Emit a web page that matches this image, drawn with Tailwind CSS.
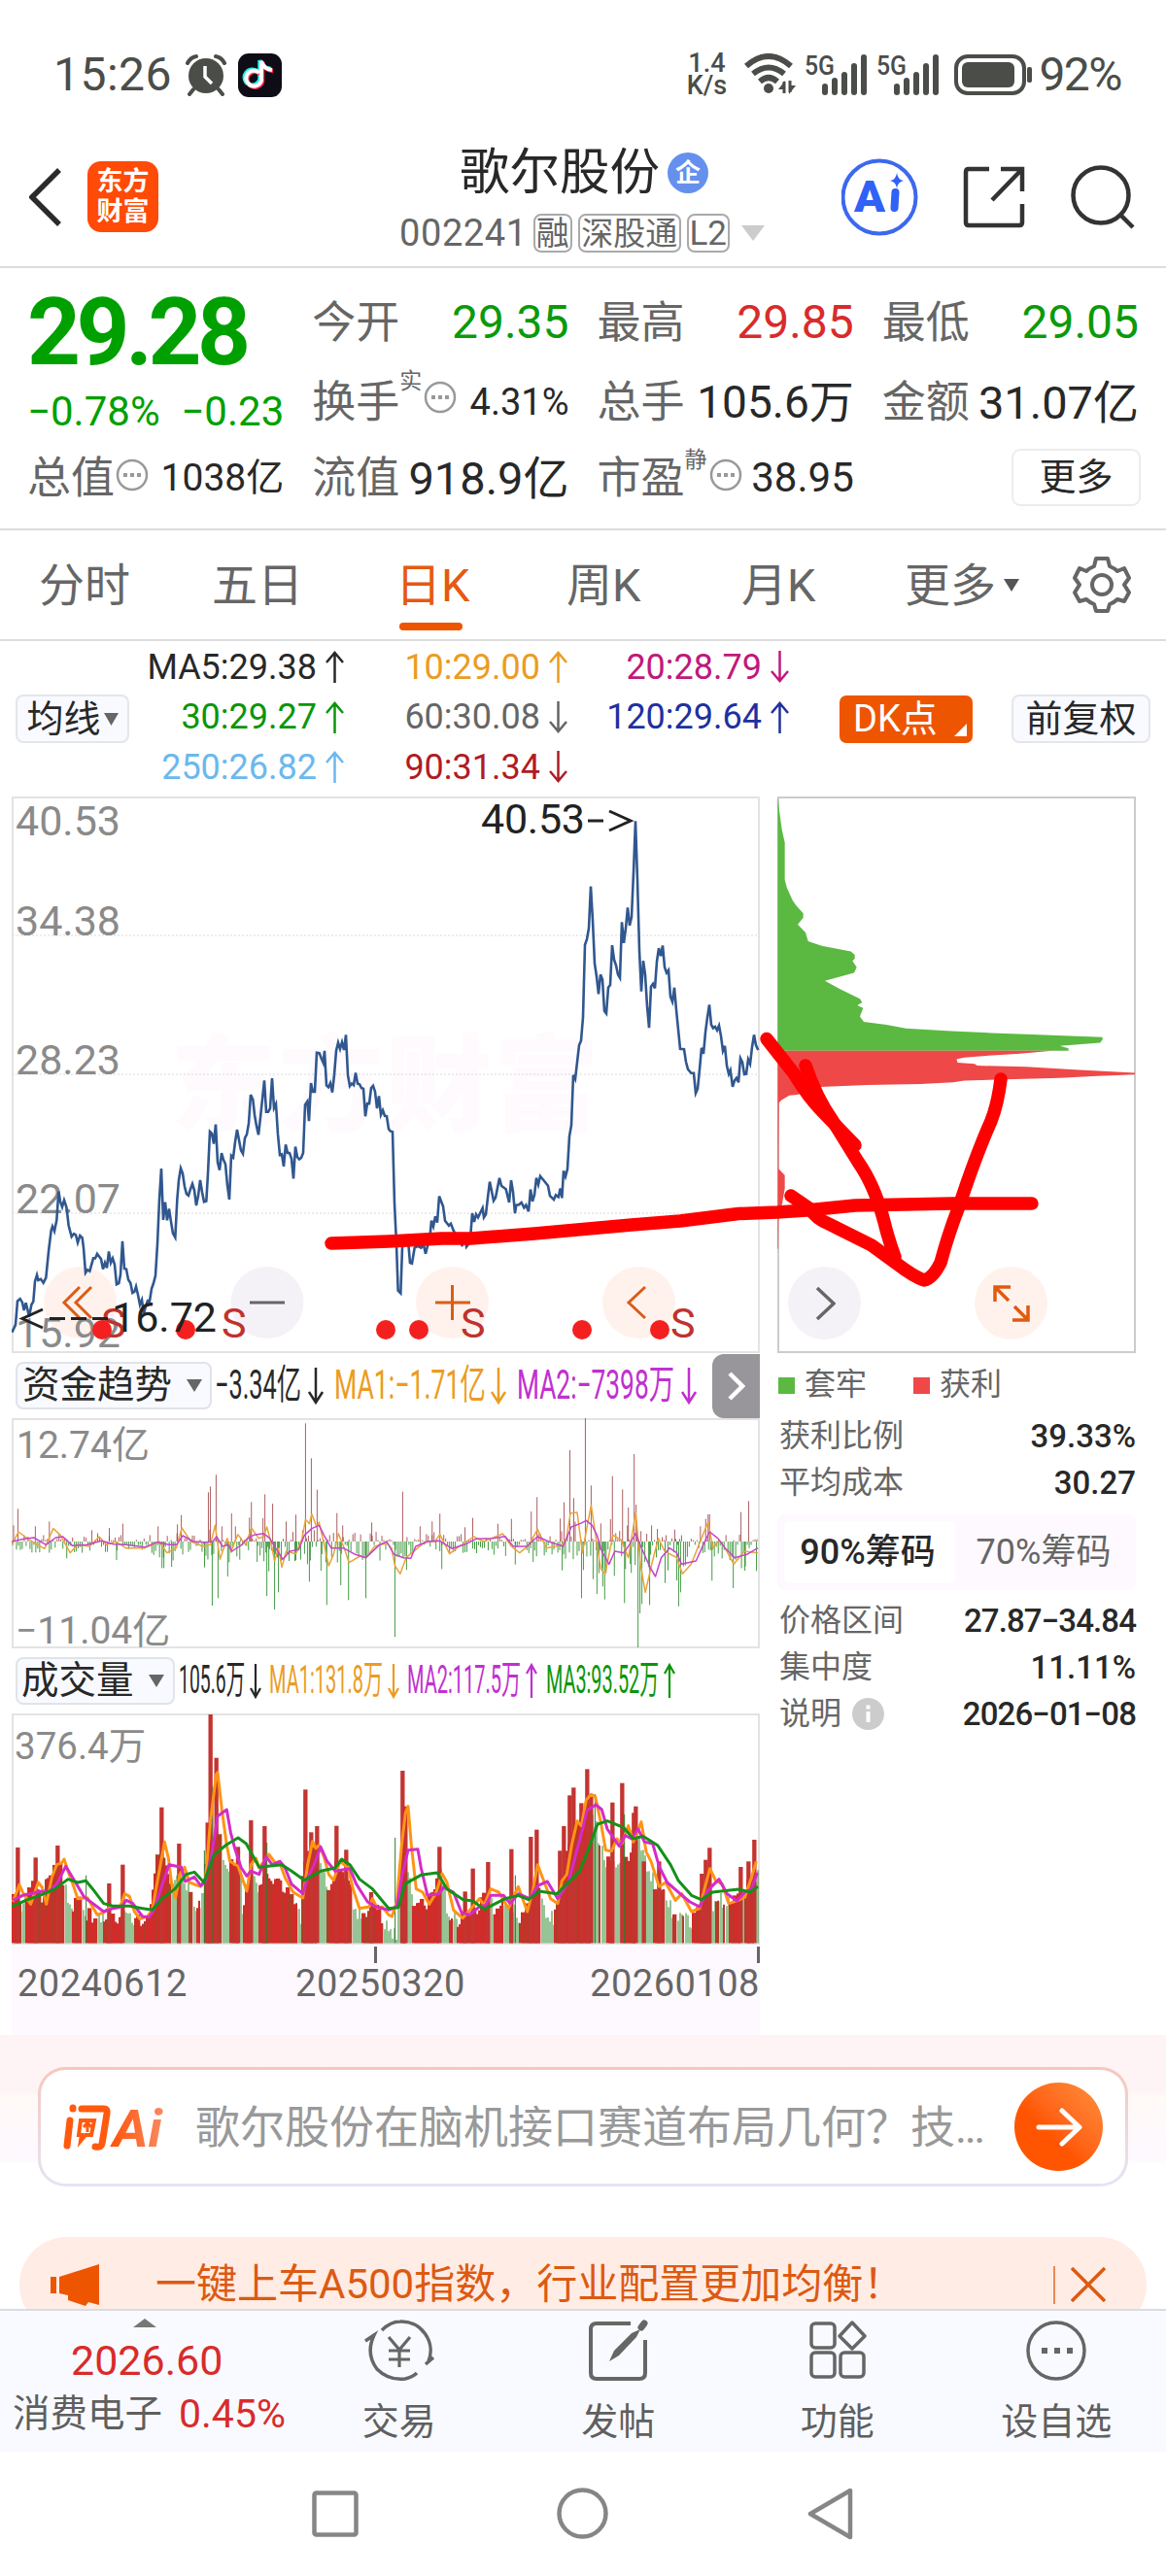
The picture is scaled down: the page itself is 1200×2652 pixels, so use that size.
<!DOCTYPE html>
<html lang="zh-CN">
  <head>
    <meta charset="UTF-8" />
    <meta name="viewport" content="width=device-width, initial-scale=1.0" />
    <title>歌尔股份 002241</title>
    <script src="https://cdn.jsdelivr.net/npm/@tailwindcss/browser@4"></script>
  </head>
  <body class="bg-white">
    <div
      class="relative w-[1200px] h-[2652px] overflow-hidden flex flex-col bg-white text-[#282828] leading-none whitespace-nowrap font-['Roboto','Noto_Sans_CJK_SC',sans-serif]"
    >
      <!-- Status bar -->
      <div class="h-[110px] shrink-0 flex items-end pb-[10px] pl-[55px] pr-[46px] text-[#4b4d49]">
        <div class="h-[46px] flex items-center">
          <span class="text-[48px] tracking-[0.500px]">15:26</span>
          <svg class="ml-[14px]" width="42" height="44" viewBox="0 0 42 44" fill="none" stroke="#4b4d49">
            <circle cx="21" cy="23" r="18" fill="#4b4d49" stroke="none" />
            <path d="M2 10 Q5 4 11 3 M40 10 Q37 4 31 3 M8 37 L4 42 M34 37 L38 42" stroke-width="4" stroke-linecap="round" />
            <path d="M20 13 V24 L27 31" stroke="#fff" stroke-width="3.5" />
          </svg>
          <svg class="ml-[12px]" width="45" height="45" viewBox="0 0 45 45" fill="none">
            <rect width="45" height="45" rx="11" fill="#0e0d17" />
            <path d="M22 20 A8 8 0 1 0 24 28 V8 Q26 16 35 17" transform="translate(-1.5 -1)" stroke="#2af0ea" stroke-width="4.5" />
            <path d="M22 20 A8 8 0 1 0 24 28 V8 Q26 16 35 17" transform="translate(1 1)" stroke="#fe2c55" stroke-width="4.5" />
            <path d="M22 20 A8 8 0 1 0 24 28 V8 Q26 16 35 17" stroke="#fff" stroke-width="4" />
          </svg>
        </div>
        <div class="ml-auto h-[46px] flex items-center">
          <div class="text-center font-medium text-[27px] leading-[23px] w-[46px]">1.4<br />K/s</div>
          <svg class="ml-[16px]" width="56" height="44" viewBox="0 0 56 44" fill="none" stroke="#4b4d49" stroke-width="6">
            <path d="M2 13 Q25 -7 48 13" />
            <path d="M9 21 Q25 8 41 21" />
            <path d="M16 29 Q25 21 34 29" />
            <circle cx="25" cy="36" r="5" fill="#4b4d49" stroke="none" />
            <path d="M41 29 V41 M47 28 V40" stroke-width="3" />
            <path d="M35 37 L42 28 V37Z M53 33 L46 42 V33Z" fill="#4b4d49" stroke="none" />
          </svg>
          <svg class="ml-[8px] overflow-visible" width="66" height="46" viewBox="0 0 66 46" fill="#4b4d49">
            <text x="-2" y="23" font-size="28" font-weight="500" textLength="31" lengthAdjust="spacingAndGlyphs">5G</text>
            <rect x="16" y="32" width="6" height="12" rx="3" /><rect x="26" y="26" width="6" height="18" rx="3" />
            <rect x="36" y="20" width="6" height="24" rx="3" /><rect x="46" y="11" width="6" height="33" rx="3" />
            <rect x="56" y="2" width="6" height="42" rx="3" />
          </svg>
          <svg class="ml-[8px] overflow-visible" width="66" height="46" viewBox="0 0 66 46" fill="#4b4d49">
            <text x="-2" y="23" font-size="28" font-weight="500" textLength="31" lengthAdjust="spacingAndGlyphs">5G</text>
            <rect x="16" y="32" width="6" height="12" rx="3" /><rect x="26" y="26" width="6" height="18" rx="3" />
            <rect x="36" y="20" width="6" height="24" rx="3" /><rect x="46" y="11" width="6" height="33" rx="3" />
            <rect x="56" y="2" width="6" height="42" rx="3" />
          </svg>
          <svg class="ml-[12px]" width="82" height="42" viewBox="0 0 82 42">
            <rect x="2" y="2" width="70" height="38" rx="12" fill="none" stroke="#4b4d49" stroke-width="4" />
            <rect x="8" y="8" width="54" height="26" rx="6" fill="#4b4d49" />
            <rect x="75" y="13" width="5" height="16" rx="2" fill="#4b4d49" />
          </svg>
          <span class="ml-[5px] text-[48px] tracking-[-1.500px]">92%</span>
        </div>
      </div>

      <!-- Title bar -->
      <div class="h-[166px] shrink-0 border-b-2 border-[#dcdcdc] flex items-start px-[30px]">
        <div class="w-[381px] flex items-center pt-[56px]">
          <svg width="33" height="62" viewBox="0 0 33 62" fill="none" stroke="#2b2b2b" stroke-width="5.5">
            <path d="M31 3 L3 31 L31 59" />
          </svg>
          <div class="ml-[27px] size-[73px] rounded-[14px] bg-[#ff4a08] text-white font-bold text-[27px] leading-[31px] flex items-center justify-center text-center">东方<br />财富</div>
        </div>
        <div class="w-[380px] pt-[41px]">
          <div class="flex items-center pl-[62px]">
            <span class="text-[51.500px] h-[54px] leading-[54px]">歌尔股份</span>
            <span class="ml-[8px] size-[42px] rounded-full bg-[#6590ee] text-white text-[26px] font-bold flex items-center justify-center">企</span>
          </div>
          <div class="mt-[15px] flex items-center text-[#666]">
            <span class="text-[38px] tracking-[0.600px]">002241</span>
            <span class="ml-[6px] h-[40px] w-[40px] border-2 border-[#aaa] rounded-[8px] text-[34px] flex items-center justify-center">融</span>
            <span class="ml-[6px] h-[40px] w-[106px] border-2 border-[#aaa] rounded-[8px] text-[33px] flex items-center justify-center">深股通</span>
            <span class="ml-[6px] h-[40px] w-[44px] border-2 border-[#aaa] rounded-[8px] text-[35px] flex items-center justify-center">L2</span>
            <svg class="ml-[12px]" width="24" height="16" viewBox="0 0 24 16"><path d="M0 0 H24 L12 16Z" fill="#ccc" /></svg>
          </div>
        </div>
        <div class="ml-auto flex items-center pt-[53px]">
          <svg width="80" height="80" viewBox="0 0 80 80">
            <circle cx="39" cy="40" r="37.5" fill="none" stroke="#3c68ef" stroke-width="4" />
            <text x="13" y="55" font-size="45" font-weight="900" fill="#2f62f5" textLength="32" lengthAdjust="spacingAndGlyphs">A</text>
            <path d="M55.500 35 L54.500 51" stroke="#2f62f5" stroke-width="8" stroke-linecap="round" />
            <path d="M57 15 Q58 22 64 23 Q58 24 57 31 Q56 24 50 23 Q56 22 57 15Z" fill="#2f62f5" />
          </svg>
          <svg class="ml-[45px]" width="64" height="64" viewBox="0 0 64 64" fill="none" stroke="#333" stroke-width="4.500">
            <path d="M27 3 H6 Q3 3 3 6 V58 Q3 61 6 61 H58 Q61 61 61 58 V39 M39 3 H61 V26 M61 3 L30 35" />
          </svg>
          <svg class="ml-[47px]" width="68" height="66" viewBox="0 0 68 66" fill="none" stroke="#333" stroke-width="4.500">
            <circle cx="31" cy="31" r="28.500" /><path d="M51 51 L64 64" />
          </svg>
        </div>
      </div>

      <!-- Quote -->
      <div class="h-[270px] shrink-0 border-b-2 border-[#dcdcdc] px-[28px] pt-[15px] grid grid-cols-4 gap-x-[29px] text-[#666]">
        <div class="flex flex-col text-[#00a000]">
          <div class="h-[102px] flex items-center text-[96px] font-bold tracking-[-4.500px]">29.28</div>
          <div class="h-[62px] flex items-center justify-between text-[42px]"><span>−0.78%</span><span>−0.23</span></div>
          <div class="h-[74px] flex items-center text-[45px] text-[#666]">
            总值
            <svg class="ml-px mb-[6px] shrink-0" width="34" height="34" viewBox="0 0 34 34"><circle cx="17" cy="17" r="15" fill="none" stroke="#999" stroke-width="2.500" /><path d="M8 17h4m3 0h4m3 0h4" stroke="#999" stroke-width="4" /></svg>
            <span class="ml-auto text-[39px] text-[#282828]">1038亿</span>
          </div>
        </div>
        <div class="flex flex-col text-[45px]">
          <div class="h-[82px] flex items-center justify-between">今开<span class="text-[48px] text-[#0a9a0a]">29.35</span></div>
          <div class="h-[82px] flex items-center">
            换手<span class="text-[23px] self-start pt-[8px]">实</span>
            <svg class="mb-[10px] ml-[2px] shrink-0" width="34" height="34" viewBox="0 0 34 34"><circle cx="17" cy="17" r="15" fill="none" stroke="#999" stroke-width="2.500" /><path d="M8 17h4m3 0h4m3 0h4" stroke="#999" stroke-width="4" /></svg>
            <span class="ml-auto text-[38px] text-[#282828]">4.31%</span>
          </div>
          <div class="h-[74px] flex items-center justify-between">流值<span class="text-[47px] text-[#282828]">918.9亿</span></div>
        </div>
        <div class="flex flex-col text-[45px]">
          <div class="h-[82px] flex items-center justify-between">最高<span class="text-[48px] text-[#d92b2b]">29.85</span></div>
          <div class="h-[82px] flex items-center justify-between">总手<span class="text-[46px] text-[#282828]">105.6万</span></div>
          <div class="h-[74px] flex items-center">
            市盈<span class="text-[23px] self-start pt-[7px]">静</span>
            <svg class="shrink-0 ml-[2px] mb-[6px]" width="34" height="34" viewBox="0 0 34 34"><circle cx="17" cy="17" r="15" fill="none" stroke="#999" stroke-width="2.500" /><path d="M8 17h4m3 0h4m3 0h4" stroke="#999" stroke-width="4" /></svg>
            <span class="ml-auto text-[42px] text-[#282828]">38.95</span>
          </div>
        </div>
        <div class="flex flex-col text-[45px]">
          <div class="h-[82px] flex items-center justify-between">最低<span class="text-[48px] text-[#0a9a0a]">29.05</span></div>
          <div class="h-[82px] flex items-center justify-between">金额<span class="text-[47px] text-[#282828]">31.07亿</span></div>
          <div class="h-[74px] flex items-center justify-end">
            <span class="mr-[-2px] mb-[2px] w-[133px] h-[59px] border-2 border-[#ececec] rounded-[9px] text-[38px] text-[#282828] flex items-center justify-center">更多</span>
          </div>
        </div>
      </div>

      <!-- Period tabs -->
      <div class="h-[114px] shrink-0 border-b-2 border-[#dcdcdc] flex items-center pl-[40px] pr-[36px] text-[47px] text-[#666]">
        <div class="w-[178px]">分时</div>
        <div class="w-[189px]">五日</div>
        <div class="relative w-[176px] text-[#e55a10]">日K<span class="absolute left-[4px] top-[62px] w-[65px] h-[8px] rounded-full bg-[#ee5500]"></span></div>
        <div class="w-[180px]">周K</div>
        <div class="w-[168px]">月K</div>
        <div class="flex items-center">更多<svg class="ml-[8px]" width="16" height="13" viewBox="0 0 16 13"><path d="M0 0 H16 L8 13Z" fill="#555" /></svg></div>
        <svg class="ml-auto" width="60" height="60" viewBox="0 0 60 60" fill="none" stroke="#666" stroke-width="4">
          <path d="M24 3 H36 L38 11 Q43 13 46 16 L53 13 L58 23 L53 30 L58 38 L53 47 L46 45 Q43 48 38 50 L36 57 H24 L22 50 Q17 48 14 45 L7 47 L2 38 L7 30 L2 23 L7 13 L14 16 Q17 13 22 11Z" stroke-linejoin="round" />
          <circle cx="30" cy="30" r="10" />
        </svg>
      </div>

      <!-- MA legend -->
      <div class="h-[160px] shrink-0 flex items-center pl-[16px] pr-[16px] text-[36px]">
        <div class="w-[117px] h-[50px] border-2 border-[#e4e6ea] rounded-[8px] bg-[#f8faff] text-[38px] flex items-center justify-center">均线<svg class="ml-[3px]" width="15" height="13" viewBox="0 0 15 13"><path d="M0 0 H15 L7.500 13Z" fill="#666" /></svg></div>
        <div class="w-[679px] h-[154px] grid grid-cols-[221px_230px_228px] items-center text-right">
          <div>MA5:29.38<svg class="inline ml-[9px] mb-[5px]" width="19" height="33" viewBox="0 0 19 33" fill="none" stroke="#282828" stroke-width="2.500"><path d="M9.500 33 V2 M1 12 L9.500 2 L18 12" /></svg></div>
          <div class="text-[#eb9c22]">10:29.00<svg class="inline ml-[9px] mb-[5px]" width="19" height="33" viewBox="0 0 19 33" fill="none" stroke="#eb9c22" stroke-width="2.500"><path d="M9.500 33 V2 M1 12 L9.500 2 L18 12" /></svg></div>
          <div class="text-[#c0187c]">20:28.79<svg class="inline ml-[9px] mb-[5px]" width="19" height="33" viewBox="0 0 19 33" fill="none" stroke="#c0187c" stroke-width="2.500"><path d="M9.500 0 V31 M1 21 L9.500 31 L18 21" /></svg></div>
          <div class="text-[#0a960a]">30:29.27<svg class="inline ml-[9px] mb-[5px]" width="19" height="33" viewBox="0 0 19 33" fill="none" stroke="#0a960a" stroke-width="2.500"><path d="M9.500 33 V2 M1 12 L9.500 2 L18 12" /></svg></div>
          <div class="text-[#666]">60:30.08<svg class="inline ml-[9px] mb-[5px]" width="19" height="33" viewBox="0 0 19 33" fill="none" stroke="#666" stroke-width="2.500"><path d="M9.500 0 V31 M1 21 L9.500 31 L18 21" /></svg></div>
          <div class="text-[#2030a0]">120:29.64<svg class="inline ml-[9px] mb-[5px]" width="19" height="33" viewBox="0 0 19 33" fill="none" stroke="#2030a0" stroke-width="2.500"><path d="M9.500 33 V2 M1 12 L9.500 2 L18 12" /></svg></div>
          <div class="text-[#6bb8ee]">250:26.82<svg class="inline ml-[9px] mb-[5px]" width="19" height="33" viewBox="0 0 19 33" fill="none" stroke="#6bb8ee" stroke-width="2.500"><path d="M9.500 33 V2 M1 12 L9.500 2 L18 12" /></svg></div>
          <div class="text-[#b01c24]">90:31.34<svg class="inline ml-[9px] mb-[5px]" width="19" height="33" viewBox="0 0 19 33" fill="none" stroke="#b01c24" stroke-width="2.500"><path d="M9.500 0 V31 M1 21 L9.500 31 L18 21" /></svg></div>
        </div>
        <div class="relative ml-[52px] w-[137px] h-[49px] rounded-[7px] bg-[#ee5500] text-white text-[38px] flex items-center pl-[14px]">DK点<svg class="absolute right-[6px] bottom-[7px]" width="13" height="13" viewBox="0 0 13 13"><path d="M13 0 V13 H0Z" fill="#fff" /></svg></div>
        <div class="ml-auto w-[143px] h-[50px] border-2 border-[#e4e6ea] rounded-[8px] bg-[#f8faff] text-[38px] flex items-center justify-center">前复权</div>
      </div>

      <div class="h-[1275px] shrink-0 flex pl-[12px]">
        <!-- Left: K line, fund trend, volume -->
        <div class="w-[770px] flex flex-col">
          <div class="relative h-[573px] border-2 border-[#e3e3e3] bg-white">
            <svg class="absolute -left-[14px] -top-[12px]" width="784" height="600" viewBox="0 0 784 600">
              <g font-size="108" font-weight="900" fill="#fefafd">
                <text x="176" y="346" textLength="440">东方财富</text>
              </g>
              <path d="M13 153 H780 M13 296 H780 M13 439 H780" stroke="#e6e6e6" stroke-width="1.500" stroke-dasharray="2 2" />
              <g font-size="43" fill="#8a8a8a">
                <text x="16" y="50">40.53</text>
                <text x="16" y="153">34.38</text>
                <text x="16" y="296">28.23</text>
                <text x="16" y="439">22.07</text>
              </g>
              <g fill="#fff2ed">
                <ellipse cx="82.500" cy="531" rx="37.500" ry="37" /><ellipse cx="465.500" cy="531" rx="37.500" ry="37" /><ellipse cx="657.500" cy="531" rx="37.500" ry="37" />
                <ellipse cx="275" cy="531" rx="37.500" ry="37" fill="#f5f2f7" />
              </g>
              <text x="16" y="577" font-size="43" fill="#8a8a8a">15.92</text>
            </svg>
            <svg class="absolute -left-[2px] -top-[2px]" width="770" height="573" viewBox="36 26 2310 1497" preserveAspectRatio="none" fill="none">
              <polyline vector-effect="non-scaling-stroke" stroke="#30578f" stroke-width="2.600" points="37,1467 48,1447 54,1383 62,1377 69,1387 74,1408 80,1388 86,1410 90,1425 97,1393 103,1384 108,1330 114,1313 118,1327 126,1324 134,1334 142,1320 150,1250 158,1193 162,1182 168,1195 175,1165 181,1088 186,1115 192,1130 198,1112 205,1130 212,1180 221,1210 228,1202 234,1205 240,1226 247,1207 254,1213 258,1240 264,1307 270,1299 277,1303 288,1268 294,1268 300,1256 306,1263 312,1270 318,1297 324,1280 330,1294 336,1250 342,1280 348,1268 354,1285 360,1338 367,1335 372,1312 378,1222 384,1296 390,1297 396,1325 403,1335 409,1361 415,1358 420,1344 426,1366 432,1393 438,1380 444,1417 450,1397 456,1382 462,1383 468,1350 474,1335 480,1315 486,1230 492,1110 498,1027 504,1165 510,1117 516,1166 522,1135 528,1170 534,1201 541,1212 547,1110 552,1058 558,1026 564,1040 570,1075 576,1095 582,1099 588,1082 594,1068 600,1085 606,1126 612,1100 618,1058 624,1090 630,1116 637,1114 642,1040 648,927 654,932 660,960 666,908 672,1010 678,1031 684,985 690,1003 696,1015 702,1072 708,1110 714,992 720,997 726,955 732,922 738,950 744,978 750,987 756,945 762,935 768,905 774,828 781,842 786,882 792,912 798,936 804,890 810,840 816,790 822,874 828,874 834,865 840,784 846,864 852,853 858,935 864,990 870,988 876,1021 882,962 888,985 894,985 900,1000 906,1054 912,968 918,996 924,1002 930,998 936,985 942,855 949,846 954,899 960,797 966,820 972,820 978,715 986,716 992,730 998,742 1002,710 1008,803 1014,808 1020,797 1026,822 1032,775 1038,710 1044,688 1050,705 1056,687 1062,708 1068,667 1074,775 1080,805 1086,798 1092,802 1098,769 1104,798 1110,800 1116,810 1122,812 1128,886 1134,852 1140,852 1146,810 1152,804 1158,820 1164,865 1170,832 1176,882 1182,870 1188,885 1194,886 1200,920 1205,926 1212,928 1218,1120 1224,1230 1229,1355 1237,1362 1242,1240 1250,1210 1258,1210 1262,1240 1266,1280 1272,1282 1280,1240 1290,1235 1300,1240 1308,1232 1314,1256 1320,1235 1328,1205 1332,1167 1338,1182 1344,1155 1350,1172 1356,1101 1368,1128 1374,1167 1386,1180 1392,1175 1400,1193 1410,1210 1420,1205 1427,1236 1434,1200 1440,1237 1448,1228 1453,1205 1458,1147 1464,1170 1470,1150 1476,1158 1490,1133 1494,1158 1500,1150 1506,1105 1512,1062 1524,1113 1530,1105 1542,1052 1548,1073 1562,1082 1572,1118 1578,1058 1584,1090 1590,1147 1594,1125 1602,1124 1610,1118 1618,1132 1624,1125 1632,1142 1638,1083 1644,1115 1650,1098 1656,1052 1662,1070 1668,1047 1680,1060 1692,1073 1698,1100 1710,1110 1716,1098 1724,1103 1730,1080 1735,1106 1740,1033 1746,1048 1752,1028 1758,940 1764,910 1770,775 1776,786 1782,740 1788,695 1794,683 1800,620 1806,425 1812,410 1818,380 1824,268 1830,360 1836,475 1842,510 1848,557 1854,505 1860,518 1866,603 1872,610 1878,540 1884,533 1890,426 1896,465 1902,480 1908,505 1914,514 1920,364 1926,420 1932,380 1938,325 1944,373 1950,350 1956,230 1962,92 1968,250 1974,440 1980,550 1986,468 1992,505 1998,590 2004,648 2010,537 2016,530 2022,542 2028,470 2034,434 2040,455 2046,427 2052,485 2058,500 2064,493 2070,565 2076,578 2082,540 2088,600 2100,705 2112,706 2118,740 2124,760 2134,770 2142,770 2148,824 2154,812 2160,760 2166,702 2172,718 2178,660 2184,620 2190,586 2196,640 2202,649 2208,645 2214,655 2220,642 2226,670 2232,710 2238,697 2244,750 2250,772 2255,762 2262,807 2268,790 2274,783 2280,795 2286,730 2292,740 2298,773 2304,772 2310,733 2316,745 2322,700 2328,667 2334,695 2341,708" />
            </svg>
            <svg class="absolute -left-[14px] -top-[12px]" width="784" height="600" viewBox="0 0 784 600" fill="none">
              <g stroke="#da5c18" stroke-width="3">
                <path d="M82 515 L66 531 L82 547 M94 515 L78 531 L94 547" />
                <path d="M448 531 H484 M465.500 513 V549" />
                <path d="M664 515 L647 531 L664 547" />
                <path d="M257 531 H293" stroke="#666" />
              </g>
              <g fill="#c0322e" font-size="43">
                <text x="104" y="567">S</text><text x="228" y="567">S</text><text x="474" y="567">S</text><text x="690" y="567">S</text>
              </g>
              <g fill="#f42020">
                <circle cx="105" cy="559" r="10" /><circle cx="191" cy="559" r="10" /><circle cx="397" cy="559" r="10" />
                <circle cx="431" cy="559" r="10" /><circle cx="599" cy="559" r="10" /><circle cx="679" cy="559" r="10" />
              </g>
              <g fill="#222" font-size="43">
                <text x="495" y="48" textLength="107">40.53</text><text x="115" y="561">16.72</text>
              </g>
              <path d="M605 35 H621 M627 25 L649 35 L627 45 M44 538 L23 547.500 L44 557 M51 547.500 H67 M73 547.500 H89 M95 547.500 H111" stroke="#222" stroke-width="3" />
            </svg>
          </div>

          <div class="h-[67px] flex items-center pl-[4px]">
            <div class="w-[202px] h-[49px] border-2 border-[#e0e3ea] rounded-[8px] bg-[#f8faff] text-[38.500px] flex items-center pl-[5px]">资金趋势<svg class="ml-[15px]" width="16" height="13" viewBox="0 0 16 13"><path d="M0 0 H16 L8 13Z" fill="#666" /></svg></div>
            <svg class="overflow-visible" width="514" height="66" viewBox="218 1393 514 66" font-size="42" fill="none">
              <text x="221" y="1439" fill="#282828" textLength="89" lengthAdjust="spacingAndGlyphs">−3.34亿</text>
              <text x="344" y="1439" fill="#eb9c22" textLength="156" lengthAdjust="spacingAndGlyphs">MA1:−1.71亿</text>
              <text x="532" y="1439" fill="#c030d0" textLength="162" lengthAdjust="spacingAndGlyphs">MA2:−7398万</text>
              <g stroke-width="2.500">
                <path d="M325 1407 V1442 M318 1432 L325 1443 L332 1432" stroke="#282828" />
                <path d="M513 1407 V1442 M506 1432 L513 1443 L520 1432" stroke="#eb9c22" />
                <path d="M709 1407 V1442 M702 1432 L709 1443 L716 1432" stroke="#c030d0" />
              </g>
            </svg>
            <div class="ml-auto w-[49px] h-[66px] rounded-l-[12px] bg-[#98969a] flex items-center justify-center">
              <svg width="18" height="30" viewBox="0 0 18 30" fill="none" stroke="#fff" stroke-width="4.500"><path d="M2 2 L15 15 L2 28" /></svg>
            </div>
          </div>

          <div class="relative h-[237px] border-2 border-[#e3e3e3]">
            <div class="absolute left-[3px] top-[7px] text-[39px] text-[#8a8a8a]">12.74亿</div>
            <div class="absolute left-[2px] bottom-[-4px] text-[39px] text-[#8a8a8a]">−11.04亿</div>
            <svg id="fund-chart" class="absolute -left-[2px] -top-[2px]" width="770" height="237" viewBox="24 209 1548 711" preserveAspectRatio="none" fill="none"></svg>
          </div>

          <div class="h-[67px] flex items-center pl-[4px]">
            <div class="w-[164px] h-[49px] border-2 border-[#e0e3ea] rounded-[8px] bg-[#f8faff] text-[38.500px] flex items-center pl-[4px]">成交量<svg class="ml-[15px]" width="16" height="13" viewBox="0 0 16 13"><path d="M0 0 H16 L8 13Z" fill="#666" /></svg></div>
            <svg class="overflow-visible" width="530" height="60" viewBox="180 1701 530 60" font-size="40" fill="none">
              <text x="184" y="1743" fill="#282828" textLength="68" lengthAdjust="spacingAndGlyphs">105.6万</text>
              <text x="277" y="1743" fill="#eb9c22" textLength="117" lengthAdjust="spacingAndGlyphs">MA1:131.8万</text>
              <text x="419" y="1743" fill="#c030d0" textLength="117" lengthAdjust="spacingAndGlyphs">MA2:117.5万</text>
              <text x="562" y="1743" fill="#0a960a" textLength="116" lengthAdjust="spacingAndGlyphs">MA3:93.52万</text>
              <g stroke-width="2.200">
                <path d="M263 1713 V1747 M258 1738 L263 1747 L268 1738" stroke="#282828" />
                <path d="M405 1713 V1747 M400 1738 L405 1747 L410 1738" stroke="#eb9c22" />
                <path d="M547 1748 V1714 M542 1723 L547 1714 L552 1723" stroke="#c030d0" />
                <path d="M689 1748 V1714 M684 1723 L689 1714 L694 1723" stroke="#0a960a" />
              </g>
            </svg>
          </div>

          <div class="relative h-[238px] border-2 border-[#e3e3e3]">
            <svg id="volume-chart" class="absolute -left-[2px] -top-[2px]" width="770" height="238" viewBox="36 193 2310 714" preserveAspectRatio="none" fill="none"></svg>
            <div class="absolute left-[1px] top-[13px] text-[38.500px] text-[#8a8a8a]">376.4万</div>
          </div>

          <div class="relative h-[93px] bg-[#fdf9fe] flex justify-between items-start pt-[21px] pl-[6px] text-[38px] tracking-[0.500px] text-[#666]">
            <span>20240612</span><span class="mr-[17px]">20250320</span><span>20260108</span>
            <span class="absolute left-[373px] top-[2px] w-[3px] h-[17px] bg-[#666]"></span>
            <span class="absolute right-0 top-[2px] w-[3px] h-[17px] bg-[#666]"></span>
          </div>
        </div>

        <!-- Right: chip distribution -->
        <div class="ml-[18px] w-[369px] flex flex-col text-[32px] text-[#666]">
          <div class="relative h-[573px] border-2 border-[#ccc] bg-white">
            <svg class="absolute -left-[2px] -top-[2px]" width="369" height="573" viewBox="63 26 1107 1497" preserveAspectRatio="none">
              <path fill="#5bb942" d="M64 27 70 70 77 115 86 150 86 250 92 270 102 290 110 305 120 318 130 328 143 340 143 352 126 370 150 392 158 415 200 428 290 443 302 452 302 462 295 468 308 485 300 500 210 522 255 543 318 570 325 580 310 588 328 595 318 618 330 632 400 640 460 650 600 657 725 662 850 666 1067 673 1067 680 1060 688 935 697 962 703 962 710 64 710Z" />
              <path fill="#ef4848" d="M64 710 912 710 812 718 727 722 640 728 616 733 620 742 672 745 680 750 832 753 970 760 1167 769 1167 774 1050 778 935 783 640 790 605 795 505 799 340 802 195 807 125 828 100 830 75 843 68 850 67 1027 86 1045 86 1080 80 1110 78 1122 67 1140 66 1243 64 1243Z" />
            </svg>
            <div class="absolute left-[9px] top-[482px] size-[75px] rounded-full bg-[#f5f2f7] flex items-center justify-center">
              <svg width="22" height="36" viewBox="0 0 22 36" fill="none" stroke="#666" stroke-width="3.500"><path d="M3 2 L20 18 L3 34" /></svg>
            </div>
            <div class="absolute left-[201px] top-[482px] size-[75px] rounded-full bg-[#fff2ed] flex items-center justify-center">
              <svg width="38" height="38" viewBox="0 0 38 38" fill="none" stroke="#e05a10" stroke-width="3.500"><path d="M2 17 V2 H18 M3 3 L16 16 M36 21 V36 H20 M35 35 L22 22" /></svg>
            </div>
          </div>
          <div class="h-[64px] flex items-center">
            <span class="size-[17px] mt-[2px] ml-px bg-[#5bb942]"></span><span class="ml-[10px]">套牢</span>
            <span class="ml-[48px] mt-[2px] size-[17px] bg-[#ef4848]"></span><span class="ml-[10px]">获利</span>
          </div>
          <div class="h-[42px] flex items-center justify-between"><span class="pl-[2px]">获利比例</span><span class="text-[33px] font-medium text-[#282828]">39.33%</span></div>
          <div class="h-[54px] flex items-center justify-between"><span class="pl-[2px]">平均成本</span><span class="text-[33px] font-medium text-[#282828]">30.27</span></div>
          <div class="mt-[6px] h-[78px] rounded-[8px] bg-[#fdf9fe] p-[7px] flex text-[36px]">
            <div class="w-[176px] h-[64px] rounded-[6px] bg-white text-[#282828] font-medium flex items-center justify-center pr-[4px]">90%筹码</div>
            <div class="flex-1 flex items-center justify-center pl-[3px]">70%筹码</div>
          </div>
          <div class="mt-[7px] h-[48px] flex items-center justify-between"><span class="pl-[2px]">价格区间</span><span class="text-[33px] font-medium tracking-[-0.900px] text-[#282828]">27.87−34.84</span></div>
          <div class="h-[48px] flex items-center justify-between"><span class="pl-[2px]">集中度</span><span class="text-[33px] font-medium text-[#282828]">11.11%</span></div>
          <div class="h-[48px] flex items-center">
            <span class="pl-[2px]">说明</span>
            <svg class="ml-[11px]" width="33" height="33" viewBox="0 0 33 33"><circle cx="16.500" cy="16.500" r="16.500" fill="#ccc" /><path d="M16.500 14 V25 M16.500 7.500 V11.500" stroke="#fff" stroke-width="4" /></svg>
            <span class="ml-auto text-[33px] font-medium tracking-[-0.900px] text-[#282828]">2026−01−08</span>
          </div>
        </div>
      </div>

      <!-- Ask AI -->
      <div class="h-[208px] shrink-0 px-[39px] pt-[33px] bg-[linear-gradient(180deg,#fff4f5_0px,#fff4f5_58px,#fffaf6_64px,#fef9fc_100px,#fdf9fe_128px,#fff_134px)]">
        <div class="h-[123px] rounded-[28px] p-[3px] bg-linear-to-b from-[#f6c6be] to-[#e4e4f5]">
          <div class="h-full rounded-[25px] bg-white flex items-center pl-[23px] pr-[23px]">
            <svg class="overflow-visible" width="108" height="50" viewBox="0 0 108 50" fill="none">
              <defs><linearGradient id="ask" x1="0" x2="1"><stop offset="0" stop-color="#ff5208" /><stop offset="1" stop-color="#f98a62" /></linearGradient></defs>
              <g stroke="#ff5a10" stroke-width="7" stroke-linecap="round" stroke-linejoin="round">
                <path d="M7 18 L4 44 M10 5 V6" /><path d="M19 6 H42 Q46 6 45 11 L40 42 Q39 46 33 45" />
              </g>
              <path d="M18 18 H32 L29 33 H23 L18 39 L19 33 H16Z" stroke="#ff5a10" stroke-width="4" /><path d="M25 20 V30 M21 25 L25 20 L29 25" stroke="#ff5a10" stroke-width="3" />
              <text x="51" y="45" font-size="53" font-style="italic" font-weight="700" fill="url(#ask)" textLength="51" lengthAdjust="spacingAndGlyphs">Ai</text>
            </svg>
            <span class="ml-[28px] text-[46px] text-[#999]">歌尔股份在脑机接口赛道布局几何？技<span class="tracking-[-2.500px]">...</span></span>
            <div class="ml-auto size-[91px] rounded-full bg-linear-to-tr from-[#ff5500] from-40% to-[#ff8f3c] flex items-center justify-center">
              <svg width="48" height="40" viewBox="0 0 48 40" fill="none" stroke="#fff" stroke-width="5" stroke-linecap="round" stroke-linejoin="round"><path d="M3 20 H44 M27 3 L45 20 L27 37" /></svg>
            </div>
          </div>
        </div>
      </div>

      <!-- Notice -->
      <div class="h-[74px] shrink-0 px-[20px] overflow-hidden">
        <div class="h-[98px] rounded-[49px] bg-[#ffece4] flex items-center pl-[32px] pr-[42px] text-[42px] text-[#dc5a12]">
          <svg width="50" height="44" viewBox="0 0 50 44" fill="#ee5500"><path d="M0 14h6v17H0z M9 14 L50 1 V43 L39 40 L36 44 L18 38 V33 L9 31Z" /></svg>
          <span class="ml-[58px]">一键上车A500指数，行业配置更加均衡！</span>
          <span class="ml-auto w-[2px] h-[39px] bg-[#e88a58]"></span>
          <svg class="ml-[16px]" width="36" height="36" viewBox="0 0 36 36" fill="none" stroke="#dc5a12" stroke-width="3.500"><path d="M1 1 L35 35 M35 1 L1 35" /></svg>
        </div>
      </div>

      <!-- Bottom toolbar -->
      <div class="h-[147px] shrink-0 border-t-2 border-[#d9dce2] bg-[#f8faff] flex text-[38px] text-[#5f5f5f]">
        <div class="w-[298px] pl-[13px] pt-[8px]">
          <svg class="ml-[124px]" width="24" height="9" viewBox="0 0 24 9"><path d="M0 9 H24 L12 0Z" fill="#777" /></svg>
          <div class="mt-[13px] pl-[60px] text-[43px] text-[#d92b2b]">2026.60</div>
          <div class="mt-[13px] flex items-center text-[38.500px]">消费电子<span class="ml-[17px] text-[41px] text-[#d92b2b]">0.45%</span></div>
        </div>
        <div class="flex-1 grid grid-cols-4 justify-items-center pt-[8px]">
          <div class="flex flex-col items-center gap-[21px]">
            <svg class="shrink-0" width="72" height="66" viewBox="0 0 72 66" fill="none" stroke="#666" stroke-width="3.500">
              <path d="M18 12 Q27 3 37 3 A30 30 0 0 1 66 44 M1 23 L10 17 Q1 36 13 52 Q25 64 42 62 Q50 60 54 56 M71 40 L63 47" />
              <path d="M25 19 L36 32 L47 19 M36 32 V50 M25 33 H47 M25 42 H47" stroke-width="3.200" />
            </svg>交易
          </div>
          <div class="flex flex-col items-center gap-[21px]">
            <svg class="shrink-0" width="62" height="66" viewBox="0 0 62 66" fill="none" stroke="#666" stroke-width="4">
              <path d="M44 5 H9 Q3 5 3 11 V56 Q3 62 9 62 H53 Q59 62 59 56 V22" /><path d="M58 5 L55 9" stroke-width="7" stroke-linecap="round" /><path d="M54 11 L50 19 L32 38 L22 44 L27 33 L45 15Z" fill="#666" stroke="none" />
            </svg>发帖
          </div>
          <div class="flex flex-col items-center gap-[21px]">
            <svg class="shrink-0" width="60" height="66" viewBox="0 0 60 66" fill="none" stroke="#666" stroke-width="3.500">
              <rect x="3" y="5" width="24" height="25" rx="4" /><rect x="3" y="35" width="24" height="25" rx="4" /><rect x="33" y="35" width="24" height="25" rx="4" /><path d="M45 4 L58 18 L45 31 L32 18Z" stroke-linejoin="round" />
            </svg>功能
          </div>
          <div class="flex flex-col items-center gap-[21px]">
            <svg class="shrink-0" width="66" height="66" viewBox="0 0 66 66" fill="none" stroke="#666"><circle cx="33" cy="33" r="29" stroke-width="3.500" /><path d="M18 33h6m7 0h6m7 0h6" stroke-width="6" /></svg>设自选
          </div>
        </div>
      </div>

      <!-- System navigation -->
      <div class="flex-1 flex items-center pl-[321px] pb-px">
        <svg width="48" height="48" viewBox="0 0 48 48" fill="none" stroke="#868686" stroke-width="4.500"><rect x="2.500" y="2.500" width="43" height="43" rx="2" /></svg>
        <svg class="ml-[204px]" width="53" height="53" viewBox="0 0 53 53" fill="none" stroke="#868686" stroke-width="4.500"><circle cx="26.500" cy="26.500" r="24" /></svg>
        <svg class="ml-[205px]" width="47" height="54" viewBox="0 0 47 54" fill="none" stroke="#868686" stroke-width="4.500" stroke-linejoin="round"><path d="M44 3 V51 L3 27Z" /></svg>
      </div>

      <!-- Hand-drawn marks -->
      <svg class="absolute left-0 top-0 pointer-events-none" width="1200" height="1400" viewBox="0 0 1200 1400" fill="none" stroke="#ff0000" stroke-width="13.500" stroke-linecap="round" stroke-linejoin="round">
        <path d="M341 1280 L400 1278 L455 1275 L485 1275 L550 1270 L650 1261 L700 1257 L760 1249.500 L800 1248 L830 1246 L880 1241 L980 1239 L1062 1239" />
        <path d="M789 1069.500 L817 1105 Q832 1130 847 1145 L880 1179" />
        <path d="M829 1097 Q840 1130 857 1154 L883 1196 Q900 1220 910 1258 Q914 1275 921 1294" />
        <path d="M814 1231 L833 1244 Q840 1255 853 1260 L897 1282 L923 1301 Q940 1314 951 1318 Q960 1316 968 1300 Q976 1270 987 1242 Q1004 1190 1020 1154 Q1027 1136 1030 1111" />
      </svg>
    </div>

    <script>
      const NS = "http://www.w3.org/2000/svg";

      function add(svg, name, attrs) {
        const el = document.createElementNS(NS, name);
        for (const key in attrs) el.setAttribute(key, attrs[key]);
        svg.appendChild(el);
      }

      function line(svg, color, width, points) {
        add(svg, "polyline", {
          points,
          stroke: color,
          "stroke-width": width,
          "stroke-linejoin": "round",
          "vector-effect": "non-scaling-stroke",
        });
      }

      let seed = 7;
      function rand() {
        seed = (seed * 16807) % 2147483647;
        return seed / 2147483647;
      }

      function drawFund() {
        const svg = document.getElementById("fund-chart");
        const zero = 590;
        // how busy each stretch is: [from x, up, down]
        const zones = [
          [24, 22, 28], [240, 20, 32], [330, 25, 50], [430, 35, 55], [600, 40, 60],
          [700, 28, 55], [790, 15, 70], [880, 25, 35], [1040, 20, 45], [1160, 60, 60],
          [1220, 50, 90], [1340, 22, 80], [1450, 35, 50], [1500, 20, 80],
        ];
        let up = "";
        let down = "";
        for (let x = 26; x < 1570; x += 4) {
          const zone = zones.filter((z) => z[0] <= x).pop();
          const r = Math.pow(rand(), 2);
          if (rand() < 0.38) up += `M${x} ${zero}V${zero - 4 - r * zone[1]}`;
          else down += `M${x} ${zero}V${zero + 10 + r * zone[2]}`;
        }
        const highs = [
          [28, 540], [37, 489], [73, 543], [102, 528], [190, 555], [226, 548], [254, 535], [327, 543], [367, 537],
          [375, 508], [431, 438], [435, 420], [447, 384], [459, 543], [479, 503], [487, 543], [516, 516],
          [520, 468], [544, 518], [548, 444], [564, 473], [592, 528], [612, 507], [632, 225], [644, 333],
          [656, 430], [697, 502], [709, 540], [769, 531], [833, 436], [869, 543], [894, 528], [910, 504],
          [962, 546], [978, 517], [1030, 535], [1058, 520], [1099, 497], [1111, 453], [1159, 519], [1167, 469],
          [1179, 308], [1187, 456], [1211, 209], [1223, 417], [1243, 534], [1263, 521], [1267, 388],
          [1288, 429], [1300, 485], [1312, 320], [1316, 476], [1348, 540], [1360, 551], [1396, 553],
          [1449, 543], [1460, 520], [1465, 506], [1468, 506], [1533, 499], [1549, 465],
        ];
        const lows = [
          [138, 642], [241, 647], [335, 672], [339, 672], [355, 668], [423, 670], [439, 788], [451, 765],
          [471, 698], [496, 646], [532, 653], [552, 758], [556, 682], [568, 800], [576, 747], [612, 648],
          [636, 660], [640, 714], [664, 680], [676, 786], [705, 725], [721, 771], [757, 765], [817, 885],
          [841, 678], [914, 675], [1066, 661], [1103, 653], [1163, 679], [1203, 765], [1207, 678], [1227, 706],
          [1235, 752], [1239, 688], [1247, 729], [1251, 769], [1271, 696], [1292, 780], [1304, 659],
          [1320, 917], [1324, 812], [1328, 783], [1344, 786], [1376, 718], [1400, 710], [1404, 790],
          [1408, 747], [1473, 711], [1517, 734], [1541, 680], [1565, 681],
        ];
        highs.forEach(([x, y]) => (up += `M${x} ${zero}V${y}`));
        lows.forEach(([x, y]) => (down += `M${x} ${zero}V${y}`));
        add(svg, "path", { d: up, stroke: "#9c3c40", "stroke-width": 2 });
        add(svg, "path", { d: down, stroke: "#1f861f", "stroke-width": 2 });
        line(svg, "#eba33a", 1.5, "24,602 38,560 58,582 75,598 92,612 110,550 125,570 145,625 160,600 185,605 205,575 220,600 240,590 260,610 300,610 330,590 345,625 365,610 376,548 395,590 420,605 435,600 445,540 455,645 470,580 478,620 492,568 508,600 520,548 535,580 545,575 552,545 560,590 568,650 576,610 583,670 592,620 612,628 625,580 632,522 640,535 645,505 655,545 660,530 672,610 680,665 690,630 700,565 712,610 722,655 745,635 757,640 775,605 800,595 810,610 817,665 828,690 840,640 860,615 880,590 900,590 910,568 930,628 950,605 980,575 1000,590 1040,566 1058,605 1075,625 1095,600 1112,552 1130,610 1150,605 1162,600 1172,580 1180,503 1194,500 1205,625 1215,540 1223,478 1235,600 1243,675 1252,690 1268,570 1285,585 1300,640 1315,500 1325,660 1335,747 1350,650 1362,580 1375,620 1400,640 1412,690 1430,660 1450,585 1465,530 1475,610 1488,585 1500,610 1518,660 1540,620 1568,625");
        line(svg, "#c545c9", 1.5, "24,590 50,582 70,578 95,600 115,578 130,575 150,603 180,600 210,588 235,598 260,600 300,607 325,592 350,600 365,600 378,572 400,590 425,592 440,590 448,575 460,605 472,600 480,620 500,600 512,580 525,570 545,565 558,580 570,610 585,645 600,620 618,615 630,570 645,550 660,540 670,570 685,610 710,610 735,630 757,640 785,600 800,590 815,630 835,640 850,642 860,605 885,590 910,588 935,612 960,600 985,582 1020,580 1045,574 1062,605 1090,605 1112,575 1135,590 1165,605 1182,545 1200,535 1213,525 1225,540 1235,570 1245,620 1260,660 1272,620 1290,625 1300,605 1315,565 1330,620 1345,670 1356,698 1368,640 1385,610 1400,625 1410,660 1440,650 1455,600 1468,560 1485,580 1500,610 1520,640 1545,630 1568,610");
      }

      function drawVolume() {
        const svg = document.getElementById("volume-chart");
        const base = 902;
        const outline = [
          [36, 712], [48, 750], [62, 780], [100, 700], [120, 720], [128, 795], [150, 665], [165, 650], [185, 640],
          [195, 690], [220, 760], [250, 750], [270, 790], [300, 810], [350, 810], [380, 800], [420, 815],
          [460, 800], [470, 740], [490, 600], [510, 640], [530, 700], [550, 680], [570, 690], [590, 700],
          [610, 790], [630, 700], [640, 560], [680, 560], [700, 640], [740, 640], [750, 770], [770, 680],
          [800, 700], [820, 650], [840, 690], [870, 700], [900, 750], [930, 795], [940, 620], [980, 580],
          [1000, 660], [1020, 720], [1040, 640], [1080, 680], [1090, 770], [1130, 800], [1150, 760], [1190, 820],
          [1225, 850], [1236, 640], [1260, 640], [1275, 745], [1310, 770], [1340, 720], [1365, 660], [1385, 800],
          [1430, 810], [1460, 790], [1490, 745], [1515, 690], [1525, 790], [1560, 740], [1590, 780], [1610, 810],
          [1640, 740], [1660, 700], [1690, 790], [1715, 800], [1730, 700], [1760, 540], [1800, 480], [1830, 470],
          [1850, 560], [1870, 640], [1900, 620], [1930, 620], [1950, 600], [1970, 560], [2000, 640], [2030, 720],
          [2060, 740], [2080, 790], [2120, 800], [2140, 810], [2160, 740], [2190, 680], [2200, 760], [2240, 740],
          [2270, 750], [2300, 720], [2345, 660],
        ];
        const falling = [
          [70, 78], [204, 222], [256, 266], [304, 318], [382, 412], [532, 546], [566, 580], [600, 606], [626, 632],
          [690, 706], [742, 750], [782, 800], [926, 932], [984, 1008], [1094, 1118], [1190, 1234], [1262, 1272],
          [1362, 1384], [1402, 1410], [1518, 1524], [1562, 1570], [1588, 1602], [1672, 1710], [1830, 1848],
          [1860, 1872], [1900, 1918], [1968, 1974], [1978, 1984], [1990, 2002], [2010, 2018], [2056, 2062],
          [2068, 2074], [2092, 2106], [2120, 2134], [2200, 2206], [2226, 2234], [2244, 2250], [2292, 2298], [2336, 2344],
        ];
        const peaks = [
          [55, 607], [110, 638], [178, 601], [337, 718], [379, 660], [499, 483], [553, 595], [641, 530], [650, 196],
          [668, 330], [735, 605], [775, 523], [817, 541], [943, 428], [961, 560], [979, 541], [1039, 540],
          [1069, 614], [1146, 745], [1243, 370], [1252, 480], [1357, 605], [1436, 743], [1460, 672], [1507, 652],
          [1579, 612], [1639, 574], [1657, 552], [1729, 617], [1741, 541], [1759, 446], [1771, 422], [1795, 470],
          [1813, 365], [1825, 450], [1891, 468], [1921, 408], [1957, 500], [1963, 480], [1988, 650], [2035, 650],
          [2167, 688], [2179, 645], [2191, 608], [2287, 667], [2311, 650], [2329, 583],
        ];
        function top(x) {
          const i = outline.findIndex((p) => p[0] > x);
          if (i < 1) return outline[outline.length - 1][1];
          const [x0, y0] = outline[i - 1];
          const [x1, y1] = outline[i];
          return y0 + ((y1 - y0) * (x - x0)) / (x1 - x0);
        }
        for (let x = 42; x < 2343; x += 6) {
          const y = top(x) + rand() * 50;
          if (falling.some(([a, b]) => x >= a - 2 && x <= b + 2)) {
            add(svg, "rect", { x: x - 1.5, y, width: 3, height: base - y, fill: "#2f8a2a" });
          } else {
            const w = falling.some(([a]) => a - x > 0 && a - x < 10) ? 6 : 13;
            add(svg, "rect", { x: x - 6, y, width: w, height: base - y, fill: rand() < 0.3 ? "#b03d26" : "#d02c2a" });
          }
        }
        peaks.forEach(([x, y]) => add(svg, "rect", { x: x - 6.5, y, width: 13, height: base - y, fill: "#c43430" }));
        [[266, 693], [631, 616], [657, 420], [824, 592], [1220, 577], [1591, 693], [1837, 442], [1928, 505]].forEach(
          ([x, y]) => add(svg, "rect", { x: x - 1.5, y, width: 3, height: base - y, fill: "#2f7a2a" })
        );
        line(svg, "#ff9414", 3, "40,775 60,722 70,745 95,782 118,715 130,730 143,782 160,700 175,660 190,655 198,643 210,680 225,720 240,765 270,762 300,815 320,808 340,790 370,792 385,750 400,758 415,805 432,828 455,820 470,800 490,690 508,590 520,640 530,720 542,762 555,690 570,668 585,715 620,728 635,700 650,520 668,380 672,375 685,490 700,600 710,650 735,665 762,742 775,660 790,640 800,670 830,628 850,655 862,650 880,700 905,745 935,763 950,660 965,588 975,610 985,600 1000,635 1015,690 1030,708 1050,650 1075,670 1090,735 1110,795 1140,790 1150,765 1165,795 1180,790 1200,815 1210,820 1225,775 1240,600 1252,500 1260,480 1270,600 1285,735 1305,745 1325,782 1345,750 1365,688 1380,715 1400,800 1428,825 1455,795 1480,765 1495,785 1515,735 1540,745 1570,795 1600,728 1628,805 1645,740 1660,660 1675,700 1700,765 1722,780 1735,710 1750,690 1765,600 1782,525 1795,540 1810,460 1825,443 1838,450 1855,530 1870,615 1888,618 1905,580 1920,595 1940,540 1955,590 1980,528 1995,620 2010,650 2035,728 2055,715 2085,770 2105,750 2135,805 2160,795 2175,735 2192,672 2210,710 2230,720 2250,780 2280,770 2300,760 2320,700 2335,650");
        line(svg, "#d42cc8", 3, "40,770 70,755 105,748 120,742 150,745 175,720 203,665 230,710 260,760 300,790 320,805 350,795 375,790 390,770 410,780 440,820 460,822 475,800 495,740 522,660 560,668 572,712 600,698 620,725 635,710 655,620 672,510 700,490 712,560 725,610 745,670 762,695 775,680 800,690 822,635 840,660 865,650 880,670 900,720 935,750 950,700 970,660 990,605 1010,650 1035,680 1080,672 1100,720 1135,775 1160,790 1200,800 1225,790 1240,700 1260,615 1290,612 1300,670 1320,755 1355,750 1370,730 1400,745 1425,808 1450,815 1480,790 1500,785 1515,755 1555,755 1575,780 1600,750 1635,765 1660,725 1690,712 1722,765 1755,715 1775,640 1800,545 1812,492 1840,475 1858,490 1875,550 1912,603 1930,570 1950,580 1970,550 1990,590 2015,595 2035,665 2060,715 2100,750 2130,775 2160,790 2185,740 2220,705 2245,750 2275,772 2300,745 2320,735 2338,685");
        line(svg, "#14901a", 3, "36,790 80,770 130,752 170,735 210,705 240,715 265,710 290,740 320,780 350,788 400,788 440,795 470,800 500,765 540,735 575,690 600,683 630,715 660,630 700,598 735,577 760,595 800,668 870,660 900,680 940,708 990,680 1035,670 1055,643 1080,660 1110,705 1150,735 1200,795 1230,792 1250,720 1300,692 1350,685 1380,735 1430,768 1460,772 1495,798 1560,765 1600,755 1632,768 1665,742 1720,750 1760,710 1790,680 1810,630 1845,535 1875,525 1925,545 1955,580 1985,572 2030,600 2070,660 2095,710 2135,755 2165,768 2200,745 2280,736 2315,745 2340,728");
      }

      drawFund();
      drawVolume();
    </script>
  </body>
</html>
